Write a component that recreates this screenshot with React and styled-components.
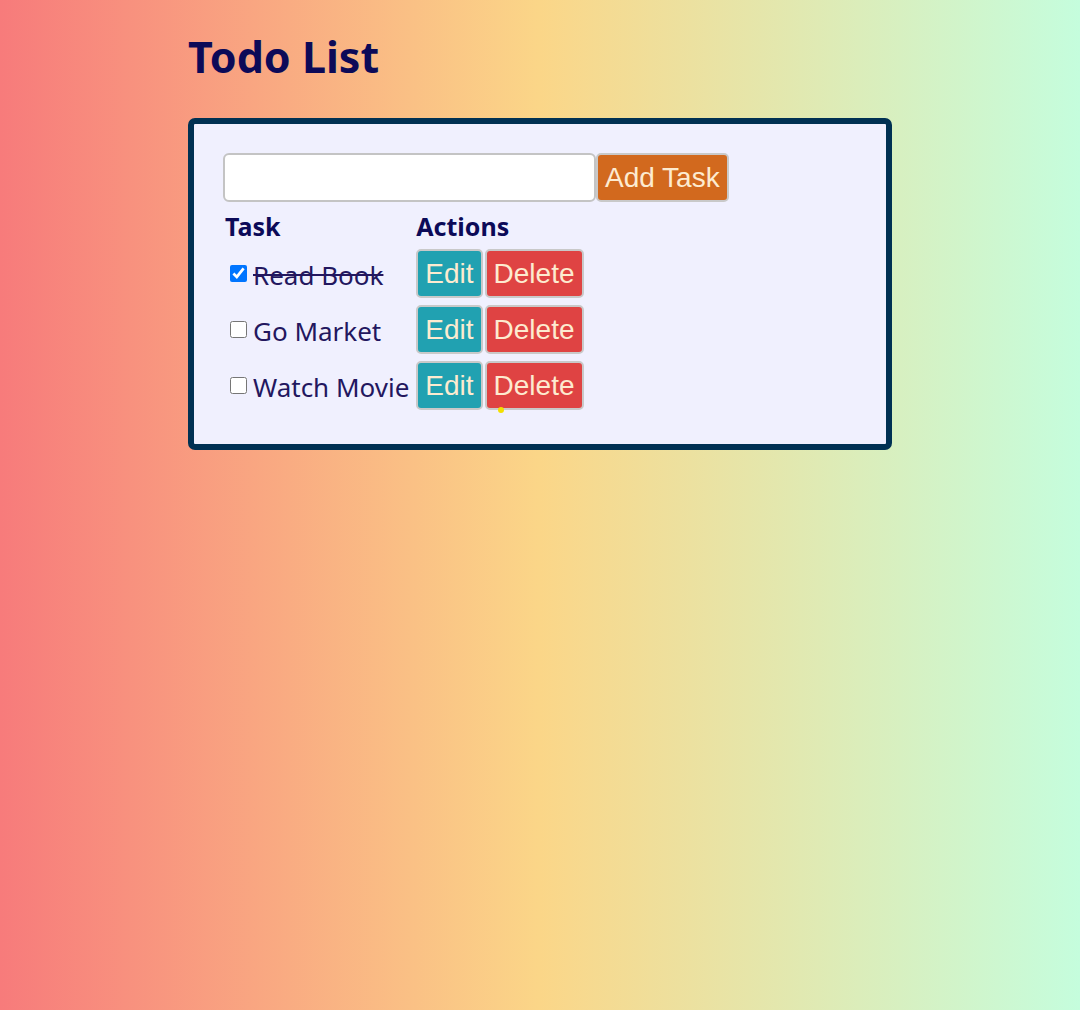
import React, { useState } from "react";
import styled, { createGlobalStyle } from "styled-components";

const Global = createGlobalStyle`
  html, body { margin: 0; padding: 0; }
  body {
    min-height: 1010px;
    background: linear-gradient(to right, #f77b7b 0%, #fbd688 50%, #c5fddd 100%);
    font-family: "Noto Sans", "Open Sans", sans-serif;
  }
`;

const Page = styled.div`
  width: 704px;
  margin: 0 auto;
  padding-top: 30px;
`;

const Title = styled.h1`
  margin: 0 0 34px 0;
  font-size: 43px;
  line-height: 54px;
  font-weight: 700;
  color: #0c0a58;
`;

const Card = styled.div`
  border: 6px solid #003153;
  border-radius: 7px;
  background: #f0f0fe;
  padding: 29px;
`;

const Form = styled.form`
  display: flex;
  align-items: stretch;
  margin-bottom: 7px;
`;

const TaskInput = styled.input`
  box-sizing: border-box;
  width: 373px;
  height: 49px;
  border: 2px solid #c4c4c4;
  border-radius: 6px;
  background: #fff;
  font-size: 24px;
  padding: 0 8px;
  margin: 0;
  outline: none;
`;

const Button = styled.button`
  box-sizing: border-box;
  height: 49px;
  border: 2px solid #c9c9c9;
  border-radius: 5px;
  padding: 0 7px;
  margin: 0 1px 0 0;
  font-family: "Liberation Sans", Arial, sans-serif;
  font-size: 28px;
  color: #fdebd0;
  background: ${(p) => p.$bg};
  cursor: pointer;
  position: relative;
`;

const Actions = styled.div`
  display: flex;
  gap: 1px;
`;

const Table = styled.table`
  border-collapse: separate;
  border-spacing: 3px;
  margin-left: -3px;
`;

const Th = styled.th`
  text-align: left;
  padding: 0 2px 4px 2px;
  font-size: 25px;
  line-height: 28px;
  font-weight: 700;
  color: #0c0a58;
`;

const Td = styled.td`
  padding: 2px;
  white-space: nowrap;
  vertical-align: middle;
`;

const TaskCell = styled.div`
  display: flex;
  align-items: center;
`;

const Check = styled.input`
  width: 17px;
  height: 17px;
  margin: 0 6px 0 5px;
`;

const TaskText = styled.span`
  font-size: 26px;
  line-height: 30px;
  padding-top: 3px;
  color: #23175f;
  text-decoration: ${(p) => (p.$done ? "line-through" : "none")};
`;

const Dot = styled.span`
  position: absolute;
  left: 11px;
  bottom: -5px;
  width: 6px;
  height: 6px;
  border-radius: 50%;
  background: #f3e000;
`;

export default function App() {
  const [tasks, setTasks] = useState([
    { id: 1, text: "Read Book", done: true },
    { id: 2, text: "Go Market", done: false },
    { id: 3, text: "Watch Movie", done: false },
  ]);

  const toggle = (id) =>
    setTasks((t) => t.map((x) => (x.id === id ? { ...x, done: !x.done } : x)));

  return (
    <>
      <Global />
      <Page>
        <Title>Todo List</Title>
        <Card>
          <Form onSubmit={(e) => e.preventDefault()}>
            <TaskInput type="text" />
            <Button type="submit" $bg="#d2691e">Add Task</Button>
          </Form>
          <Table>
            <thead>
              <tr>
                <Th>Task</Th>
                <Th>Actions</Th>
              </tr>
            </thead>
            <tbody>
              {tasks.map((t, i) => (
                <tr key={t.id}>
                  <Td>
                    <TaskCell>
                      <Check type="checkbox" checked={t.done} onChange={() => toggle(t.id)} />
                      <TaskText $done={t.done}>{t.text}</TaskText>
                    </TaskCell>
                  </Td>
                  <Td>
                    <Actions>
                      <Button $bg="#21a1b1">Edit</Button>
                      <Button $bg="#df4343">
                        Delete
                        {i === tasks.length - 1 && <Dot />}
                      </Button>
                    </Actions>
                  </Td>
                </tr>
              ))}
            </tbody>
          </Table>
        </Card>
      </Page>
    </>
  );
}
